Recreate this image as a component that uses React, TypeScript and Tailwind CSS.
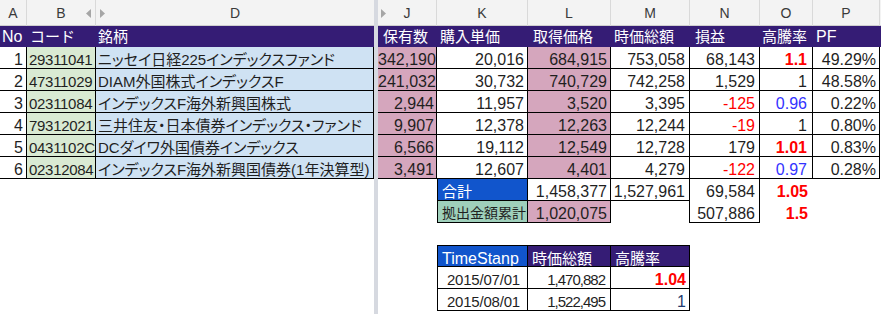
import React from "react";

type Tone = "plain" | "red" | "blue";

type Row = {
  no: number;
  code: string;
  name: string;
  j: string;
  k: string;
  l: string;
  m: string;
  n: string;
  nRed?: boolean;
  o: string;
  oTone: Tone;
  p: string;
};

const rows: Row[] = [
  { no: 1, code: "29311041", name: "ニッセイ日経225インデックスファンド", j: "342,190", k: "20,016", l: "684,915", m: "753,058", n: "68,143", o: "1.1", oTone: "red", p: "49.29%" },
  { no: 2, code: "47311029", name: "DIAM外国株式インデックスF", j: "241,032", k: "30,732", l: "740,729", m: "742,258", n: "1,529", o: "1", oTone: "plain", p: "48.58%" },
  { no: 3, code: "02311084", name: "インデックスF海外新興国株式", j: "2,944", k: "11,957", l: "3,520", m: "3,395", n: "-125", nRed: true, o: "0.96", oTone: "blue", p: "0.22%" },
  { no: 4, code: "79312021", name: "三井住友・日本債券インデックス・ファンド", j: "9,907", k: "12,378", l: "12,263", m: "12,244", n: "-19", nRed: true, o: "1", oTone: "plain", p: "0.80%" },
  { no: 5, code: "0431102C", name: "DCダイワ外国債券インデックス", j: "6,566", k: "19,112", l: "12,549", m: "12,728", n: "179", o: "1.01", oTone: "red", p: "0.83%" },
  { no: 6, code: "02312084", name: "インデックスF海外新興国債券(1年決算型)", j: "3,491", k: "12,607", l: "4,401", m: "4,279", n: "-122", nRed: true, o: "0.97", oTone: "blue", p: "0.28%" },
];

const toneClass: Record<Tone, string> = {
  plain: "text-[#1f1f1f]",
  red: "text-[#ff0000] font-bold",
  blue: "text-[#3333ff]",
};

// one spreadsheet row is 22px, text sits low like in Excel
const cell = "h-[22px] shrink-0 overflow-hidden whitespace-nowrap pt-[3px] leading-[19px]";
const grid = "border-b border-r border-black";
const colHead = "flex h-[26px] items-center justify-center border-r border-[#d9d9d9] text-[14px] text-[#3a3a3a]";

const LeftArrow = () => (
  <svg width="5" height="9" viewBox="0 0 5 9" className="absolute right-[4px] top-[9px]">
    <path d="M5 0 L0 4.5 L5 9 Z" fill="#a6a6a6" />
  </svg>
);

const RightArrow = ({ className }: { className: string }) => (
  <svg width="5" height="9" viewBox="0 0 5 9" className={className}>
    <path d="M0 0 L5 4.5 L0 9 Z" fill="#a6a6a6" />
  </svg>
);

const App = () => {
  return (
    <div className="flex h-[314px] w-[881px] overflow-hidden bg-white font-['Liberation_Sans','Noto_Sans_CJK_JP',sans-serif] text-[#1f1f1f]">
      {/* Left block: A, B, D */}
      <div className="flex w-[374px] shrink-0 flex-col">
        <div className="flex h-[26px] border-b border-[#cfcfcf] bg-[#f3f3f3]">
          <div className={`${colHead} w-[27px]`}>A</div>
          <div className={`${colHead} relative w-[69px]`}>
            B
            <LeftArrow />
          </div>
          <div className={`${colHead} relative w-[278px] border-r-0`}>
            D
            <RightArrow className="absolute left-[4px] top-[9px]" />
          </div>
        </div>

        <div className="flex h-[21px] bg-[#351c75] leading-[21px] text-white">
          <div className="w-[27px] pl-[2px] text-[16px]">No</div>
          <div className="w-[69px] pl-[3px] text-[15px]">コード</div>
          <div className="w-[278px] pl-[2px] text-[15px]">銘柄</div>
        </div>

        {rows.map((r) => (
          <div key={r.no} className="flex">
            <div className={`${cell} ${grid} w-[27px] pr-[3px] text-right text-[16px]`}>{r.no}</div>
            <div className={`${cell} ${grid} w-[69px] bg-[#d9ead3] pl-[2px] text-[15px] tracking-[-0.3px]`}>{r.code}</div>
            <div className={`${cell} ${grid} w-[278px] bg-[#cfe2f3] pl-[2px] text-[15px] [font-feature-settings:'palt']`}>{r.name}</div>
          </div>
        ))}
      </div>

      {/* frozen pane divider */}
      <div className="h-full w-[4px] shrink-0 bg-[#d6d9e0]" />

      {/* Right block: J to P */}
      <div className="flex w-[503px] shrink-0 flex-col">
        <div className="flex h-[26px] border-b border-[#cfcfcf] bg-[#f3f3f3]">
          <div className={`${colHead} relative w-[59px]`}>
            J
            <RightArrow className="absolute left-[3px] top-[9px]" />
          </div>
          <div className={`${colHead} w-[91px]`}>K</div>
          <div className={`${colHead} w-[83px]`}>L</div>
          <div className={`${colHead} w-[79px]`}>M</div>
          <div className={`${colHead} w-[70px]`}>N</div>
          <div className={`${colHead} w-[53px]`}>O</div>
          <div className={`${colHead} w-[67px]`}>P</div>
        </div>

        <div className="flex h-[21px] bg-[#351c75] leading-[21px] text-white">
          <div className="w-[59px] pl-[5px] text-[15px]">保有数</div>
          <div className="w-[91px] pl-[3px] text-[15px]">購入単価</div>
          <div className="w-[83px] pl-[5px] text-[15px]">取得価格</div>
          <div className="w-[79px] pl-[3px] text-[15px]">時価総額</div>
          <div className="w-[70px] pl-[5px] text-[15px]">損益</div>
          <div className="w-[53px] pl-[2px] text-[15px]">高騰率</div>
          <div className="w-[67px] pl-[3px] text-[16px]">PF</div>
        </div>

        {rows.map((r) => (
          <div key={r.no} className="flex text-right text-[16px]">
            <div className={`${cell} ${grid} w-[59px] bg-[#d5a6bd] pr-[2px]`}>{r.j}</div>
            <div className={`${cell} ${grid} w-[91px] pr-[3px]`}>{r.k}</div>
            <div className={`${cell} ${grid} w-[83px] bg-[#d5a6bd] pr-[3px]`}>{r.l}</div>
            <div className={`${cell} ${grid} w-[79px] pr-[4px]`}>{r.m}</div>
            <div className={`${cell} ${grid} w-[70px] pr-[4px] ${r.nRed ? "text-[#ff0000]" : ""}`}>{r.n}</div>
            <div className={`${cell} ${grid} w-[53px] pr-[5px] ${toneClass[r.oTone]}`}>{r.o}</div>
            <div className={`${cell} ${grid} w-[67px] pr-[3px]`}>{r.p}</div>
          </div>
        ))}

        {/* totals */}
        <div className="flex text-right text-[16px]">
          <div className="w-[59px] shrink-0" />
          <div className={`${cell} ${grid} w-[91px] border-l bg-[#1155cc] pl-[4px] text-left text-[15px] text-white`}>合計</div>
          <div className={`${cell} ${grid} w-[83px] pr-[3px]`}>1,458,377</div>
          <div className={`${cell} ${grid} w-[79px] pr-[4px]`}>1,527,961</div>
          <div className={`${cell} border-r border-black w-[70px] pr-[4px]`}>69,584</div>
          <div className={`${cell} w-[53px] pr-[5px] ${toneClass.red}`}>1.05</div>
        </div>
        <div className="flex text-right text-[16px]">
          <div className="w-[59px] shrink-0" />
          <div className={`${cell} ${grid} w-[91px] border-l bg-[#9fd0bb] pl-[4px] text-left text-[14px]`}>拠出金額累計</div>
          <div className={`${cell} ${grid} w-[83px] bg-[#d5a6bd] pr-[3px]`}>1,020,075</div>
          <div className={`${cell} border-r border-black w-[79px]`} />
          <div className={`${cell} ${grid} w-[70px] pr-[4px]`}>507,886</div>
          <div className={`${cell} w-[53px] pr-[5px] ${toneClass.red}`}>1.5</div>
        </div>

        <div className="h-[22px]" />

        {/* time stamp table */}
        <div className="ml-[59px] flex flex-col">
          <div className="flex text-white">
            <div className={`${cell} ${grid} w-[91px] border-l border-t bg-[#1155cc] pl-[4px] text-[16px]`}>TimeStanp</div>
            <div className={`${cell} ${grid} w-[83px] border-t bg-[#351c75] pl-[4px] text-[15px]`}>時価総額</div>
            <div className={`${cell} ${grid} w-[79px] border-t bg-[#351c75] pl-[4px] text-[15px]`}>高騰率</div>
          </div>
          <div className="flex text-right">
            <div className={`${cell} ${grid} w-[91px] border-l pr-[7px] text-[15px] tracking-[-0.2px]`}>2015/07/01</div>
            <div className={`${cell} ${grid} w-[83px] pr-[5px] text-[15px] tracking-[-1px]`}>1,470,882</div>
            <div className={`${cell} ${grid} w-[79px] pr-[3px] text-[16px] ${toneClass.red}`}>1.04</div>
          </div>
          <div className="flex text-right">
            <div className={`${cell} ${grid} w-[91px] border-l pr-[7px] text-[15px] tracking-[-0.2px]`}>2015/08/01</div>
            <div className={`${cell} ${grid} w-[83px] pr-[5px] text-[15px] tracking-[-1px]`}>1,522,495</div>
            <div className={`${cell} ${grid} w-[79px] pr-[3px] text-[16px] text-[#1f3a6e]`}>1</div>
          </div>
        </div>
      </div>
    </div>
  );
};

export default App;
